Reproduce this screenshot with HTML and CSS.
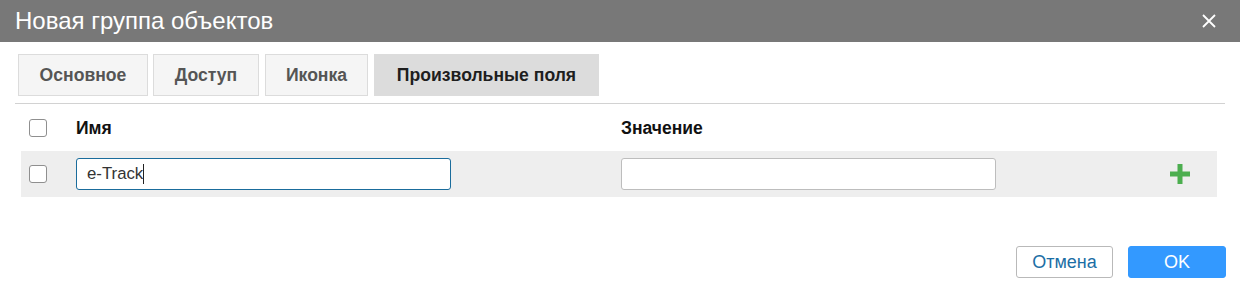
FILE: index.html
```html
<!DOCTYPE html>
<html lang="ru">
<head>
<meta charset="utf-8">
<title>Новая группа объектов</title>
<link rel="stylesheet" href="styles.css">
</head>
<body>
<div class="dialog">
  <div class="header">
    <span class="title">Новая группа объектов</span>
    <span class="close">
      <svg width="14" height="14" viewBox="0 0 14 14"><path d="M1 1 L13 13 M13 1 L1 13" stroke="#fff" stroke-width="1.8" fill="none"/></svg>
    </span>
  </div>
  <div class="tabs">
    <div class="tab t1">Основное</div>
    <div class="tab t2">Доступ</div>
    <div class="tab t3">Иконка</div>
    <div class="tab active t4">Произвольные поля</div>
  </div>
  <div class="table">
    <div class="row head">
      <div class="cell-check"><span class="checkbox"></span></div>
      <div class="cell-name">Имя</div>
      <div class="cell-value">Значение</div>
      <div class="cell-act"></div>
    </div>
    <div class="row item">
      <div class="cell-check"><span class="checkbox"></span></div>
      <div class="cell-name"><div class="input focus">e-Track<span class="caret"></span></div></div>
      <div class="cell-value"><div class="input"></div></div>
      <div class="cell-act">
        <svg width="20" height="20" viewBox="0 0 20 20"><path d="M7.5 0 H12.5 V7.5 H20 V12.5 H12.5 V20 H7.5 V12.5 H0 V7.5 H7.5 Z" fill="#4cae4f"/></svg>
      </div>
    </div>
  </div>
  <div class="footer">
    <button class="btn cancel">Отмена</button>
    <button class="btn ok">OK</button>
  </div>
</div>
</body>
</html>
```
FILE: styles.css
```css
* { box-sizing: border-box; }
html, body { margin: 0; padding: 0; background: #fff; }
body { font-family: "Liberation Sans", Arial, sans-serif; width: 1240px; height: 287px; overflow: hidden; }

.header {
  height: 42px;
  background: #787878;
  display: flex;
  align-items: center;
  justify-content: space-between;
  padding: 0 24px 0 15px;
}
.title { color: #fff; font-size: 24px; }
.close { display: flex; width: 14px; height: 14px; }

.tabs {
  margin: 12px 15px 0 15px;
  padding: 0 0 7px 3px;
  border-bottom: 1px solid #d2d2d2;
  display: flex;
  gap: 5px;
}
.tab {
  height: 42px;
  display: flex;
  align-items: center;
  justify-content: center;
  background: #f5f5f5;
  border: 1px solid #dcdcdc;
  color: #555;
  font-size: 17.6px;
  font-weight: bold;
}
.t1 { width: 130px; }
.t2 { width: 106px; }
.t3 { width: 103px; margin-left: 1px; }
.t4 { width: 225px; margin-left: 1px; }
.tab.active { background: #dcdcdc; border-color: #dcdcdc; color: #1e1e1e; }

.table { margin: 0 23px 0 21px; }
.row {
  display: grid;
  grid-template-columns: 55px 545px 375px 1fr;
  align-items: center;
}
.row.head { height: 47px; font-size: 17.5px; font-weight: bold; color: #111; padding-top: 1px; }
.row.item { height: 46px; background: #eee; }
.cell-check { padding-left: 8px; display: flex; }
.checkbox {
  width: 18px; height: 18px;
  border: 1px solid #8f8f8f;
  border-radius: 3px;
  background: #fff;
  display: block;
}
.input {
  width: 375px;
  height: 32px;
  border: 1px solid #bdbdbd;
  border-radius: 3px;
  background: #fff;
  font-size: 16.8px;
  color: #333;
  padding-left: 10px;
  display: flex;
  align-items: center;
}
.input.focus { border-color: #1a6c9c; }
.caret { display: inline-block; width: 1px; height: 20px; background: #222; margin-left: 0; }
.cell-act { display: flex; justify-content: flex-end; padding-right: 27px; }

.footer {
  margin-top: 49px;
  display: flex;
  justify-content: flex-end;
  gap: 15px;
  padding-right: 14px;
}
.btn {
  height: 32px;
  font-family: "Liberation Sans", Arial, sans-serif;
  font-size: 18px;
  border-radius: 3px;
  padding: 0;
}
.cancel { width: 97px; background: #fff; border: 1px solid #b9b9b9; color: #1c6ea5; }
.ok { width: 98px; background: #3399ff; border: 1px solid #3399ff; color: #fff; }
```
